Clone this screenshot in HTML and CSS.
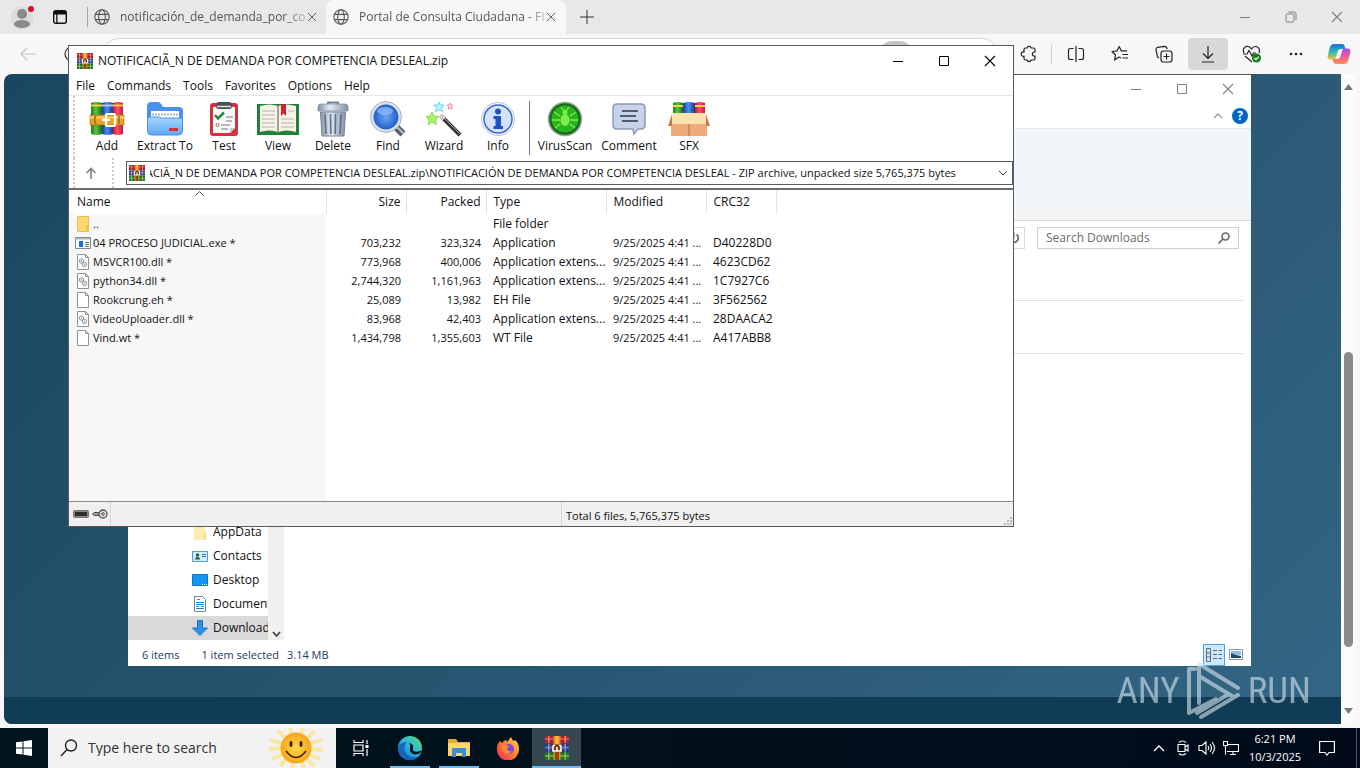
FILE: index.html
```html
<!DOCTYPE html>
<html lang="en">
<head>
<meta charset="utf-8">
<title>Desktop</title>
<meta name="viewport" content="width=device-width, initial-scale=1">
<link rel="stylesheet" href="styles.css">
</head>
<body>
<svg class="defs" aria-hidden="true">
  <defs>
    <linearGradient id="gGreen"><stop offset="0" stop-color="#1f7a1f"/><stop offset=".45" stop-color="#58c63e"/><stop offset="1" stop-color="#147014"/></linearGradient>
    <linearGradient id="gBlue"><stop offset="0" stop-color="#173c9c"/><stop offset=".45" stop-color="#4d8ff0"/><stop offset="1" stop-color="#153a99"/></linearGradient>
    <linearGradient id="gRed"><stop offset="0" stop-color="#c9152d"/><stop offset=".45" stop-color="#ff5068"/><stop offset="1" stop-color="#c0184a"/></linearGradient>
    <linearGradient id="gFolder" x2="0" y2="1"><stop offset="0" stop-color="#a6d8ff"/><stop offset="1" stop-color="#5fa8f4"/></linearGradient>
    <linearGradient id="gSteel"><stop offset="0" stop-color="#8492a8"/><stop offset=".4" stop-color="#e4ebf5"/><stop offset="1" stop-color="#8492a8"/></linearGradient>
    <linearGradient id="gEdge" x1="0" y1="1" x2="1" y2="0"><stop offset="0" stop-color="#0b5fb8"/><stop offset=".5" stop-color="#2bb3e0"/><stop offset="1" stop-color="#5be06a"/></linearGradient>
    <radialGradient id="gLens"><stop offset="0" stop-color="#6aa6f8"/><stop offset="1" stop-color="#1b56c4"/></radialGradient>
    <linearGradient id="gFox" x1="1" y1="0" x2="0" y2="1"><stop offset="0" stop-color="#ffe14a"/><stop offset=".5" stop-color="#ff7a26"/><stop offset="1" stop-color="#f0256a"/></linearGradient>
    <radialGradient id="gSun"><stop offset="0" stop-color="#ffd94a"/><stop offset="1" stop-color="#f5a51d"/></radialGradient>
    <linearGradient id="gCop1" x2="0" y2="1"><stop offset="0" stop-color="#1b6fe0"/><stop offset=".5" stop-color="#2cb7b0"/><stop offset="1" stop-color="#f3c527"/></linearGradient>
    <linearGradient id="gCop2" x2="0" y2="1"><stop offset="0" stop-color="#a24be8"/><stop offset=".5" stop-color="#ee5a9a"/><stop offset="1" stop-color="#ff9350"/></linearGradient>
  </defs>
  <symbol id="globe" viewBox="0 0 16 16"><g fill="none" stroke="#555" stroke-width="1.1"><circle cx="8" cy="8" r="7.2"/><ellipse cx="8" cy="8" rx="3.3" ry="7.2"/><path d="M1.4 5.4h13.2M1.4 10.6h13.2"/></g></symbol>
  <symbol id="rar" viewBox="0 0 24 24"><path fill="#a81f3c" d="M0 0h24v7.500H0z"/><path fill="#df4660" d="M0 2h24v2H0z"/><path fill="#25399a" d="M0 8h24v8H0z"/><path fill="#4f78d8" d="M0 10.500h24v2H0z"/><path fill="#1b7432" d="M0 16.500h24V24H0z"/><path fill="#4bb04c" d="M0 19h24v2H0z"/><path fill="#e6b848" d="M3 0h1.500v7H3zM3 8h1.500v7.500H3zM3 16.500h1.500V24H3zM19.500 0H21v7h-1.500zM19.500 8H21v7.500h-1.500zM19.500 16.500H21V24h-1.500z" opacity=".7"/><path fill="#e58a1c" d="M8.500 0h7v24h-7z"/><path fill="#f8b64a" d="M10.500 0h3v8h-3z"/><path fill="#8a4a10" d="M10 16h4v8h-4z"/><path fill="#7a3a14" d="M7 8.500h10v7.500H7z"/><path fill="none" stroke="#fff" stroke-width="1.600" d="M8 9.500V15h8V9.500M12 11v4M8 9.500h2M14 9.500h2"/></symbol>
  <symbol id="min" viewBox="0 0 12 12"><path fill="none" stroke="currentColor" d="M1 6.5h10"/></symbol>
  <symbol id="max" viewBox="0 0 12 12"><path fill="none" stroke="currentColor" d="M1.5 1.5h9v9h-9z"/></symbol>
  <symbol id="close" viewBox="0 0 12 12"><path fill="none" stroke="currentColor" stroke-width="1.1" d="M1 1l10 10M11 1L1 11"/></symbol>
  <symbol id="page" viewBox="0 0 16 16"><path fill="#fff" stroke="#8b949b" d="M2.500.5h8l3 3v12h-11z"/><path fill="none" stroke="#8b949b" d="M10.500.5v3h3"/></symbol>
  <symbol id="dll" viewBox="0 0 16 16"><use href="#page"/><g fill="none" stroke="#8d969d"><circle cx="6.500" cy="7" r="2.200"/><circle cx="9.500" cy="10.500" r="2.200"/><circle cx="6.500" cy="7" r=".5"/><circle cx="9.500" cy="10.500" r=".5"/></g></symbol>
</svg>

<main class="desktop">
  <section class="browser">
    <div class="tabstrip">
      <button class="avatar" aria-label="Profile"><svg width="24" height="28" viewBox="0 0 24 28"><circle cx="12" cy="15" r="11.500" fill="#dcdcdc"/><circle cx="12" cy="11" r="5" fill="#8a8a8a"/><ellipse cx="12" cy="21" rx="8" ry="4" fill="#8a8a8a"/><circle cx="21" cy="6" r="3" fill="#d8102c"/></svg></button>
      <button class="workspace" aria-label="Tab actions"><svg width="16" height="16" viewBox="0 0 16 16"><rect x="1.700" y="1.700" width="12.600" height="12.600" rx="2" fill="none" stroke="#111" stroke-width="1.400"/><path fill="#111" d="M2 2h12v3.500H5.500V14H4.200V5.500H2z"/></svg></button>
      <hr>
      <div class="tab"><svg width="16" height="16"><use href="#globe"/></svg><span>notificación_de_demanda_por_co</span><button aria-label="Close tab"><svg width="10" height="10"><use href="#close"/></svg></button></div>
      <div class="tab active"><svg width="16" height="16"><use href="#globe"/></svg><span>Portal de Consulta Ciudadana - FI</span><button aria-label="Close tab"><svg width="10" height="10"><use href="#close"/></svg></button></div>
      <button class="newtab" aria-label="New tab"><svg width="14" height="14" viewBox="0 0 14 14"><path stroke="#333" d="M7 0v14M0 7h14"/></svg></button>
      <div class="wincontrols muted push">
        <button aria-label="Minimize"><svg width="12" height="12"><use href="#min"/></svg></button>
        <button aria-label="Restore"><svg width="12" height="12" viewBox="0 0 12 12"><path fill="none" stroke="currentColor" d="M1 4q0-1 1-1h6q1 0 1 1v6q0 1-1 1H2q-1 0-1-1zM3.500 1H9q2 0 2 2v6"/></svg></button>
        <button aria-label="Close"><svg width="12" height="12"><use href="#close"/></svg></button>
      </div>
    </div>
    <div class="toolbar">
      <button aria-label="Back"><svg width="16" height="14" viewBox="0 0 16 14"><path fill="none" stroke="#c4c4c4" stroke-width="1.200" d="M16 7H1M7 1L1 7l6 6"/></svg></button>
      <button class="reload" aria-label="Refresh"><svg width="16" height="16" viewBox="0 0 16 16"><circle cx="8" cy="8" r="7" fill="none" stroke="#333" stroke-width="1.200"/></svg></button>
      <div class="omnibox"><i></i></div>
      <button aria-label="Extensions"><svg width="18" height="18" viewBox="0 0 18 18"><path fill="none" stroke="#222" stroke-width="1.200" stroke-linejoin="round" d="M4 4.500q0-1.500 1.500-1.500H7a2.200 2.200 0 0 1 4.200 0h2.300Q15 3 15 4.500V7h-.5a2 2 0 0 0 0 4.200h.5v2.300q0 1.500-1.500 1.500h-2.300a2.200 2.200 0 0 1-4.200 0H5.500Q4 15 4 13.500v-2.300a2.200 2.200 0 1 1 0-4.200z"/></svg></button>
      <hr>
      <button aria-label="Split screen"><svg width="18" height="18" viewBox="0 0 18 18"><path fill="none" stroke="#222" stroke-width="1.200" d="M9 1v16M6.500 3.500H3.500q-2 0-2 2v7q0 2 2 2h3M11.500 3.500h3q2 0 2 2v7q0 2-2 2h-3"/></svg></button>
      <button aria-label="Favorites"><svg width="18" height="18" viewBox="0 0 18 18"><path fill="none" stroke="#222" stroke-width="1.200" stroke-linejoin="round" d="M10 13l-2-1-4.500 3 1-5L1 6.500l5-.6L8.200 1.500l2.200 4.400H16M11.500 9.500H17M11.500 13H17"/></svg></button>
      <button aria-label="Collections"><svg width="18" height="18" viewBox="0 0 18 18"><g fill="none" stroke="#222" stroke-width="1.200"><rect x="6" y="6" width="11" height="11" rx="2.500"/><path d="M11.500 8.500v6M8.500 11.500h6M4 13l-1.500-1L1 5q-.3-2 1.500-2.700l7-1q1.800 0 2.500 2l.2.700"/></g></svg></button>
      <button class="pressed" aria-label="Downloads"><svg width="18" height="18" viewBox="0 0 18 18"><path fill="none" stroke="#222" stroke-width="1.200" d="M9 1v12M4 8.500l5 5 5-5M3 17h12"/></svg></button>
      <button aria-label="Browser essentials"><svg width="20" height="18" viewBox="0 0 20 18"><path fill="none" stroke="#222" stroke-width="1.200" d="M2 8C0 4 3 1 6 1.500q2 .3 3.500 2.500Q11 1.500 13.500 1.500c3 0 5 3 3.500 6.500M1 9h4l2-3.500 3 5.500 1.500-3H14M3 11l7 6"/><circle cx="14.500" cy="13" r="4.500" fill="#14801f"/><path fill="none" stroke="#fff" stroke-width="1.200" d="M12.300 13l1.700 1.600 2.700-3"/></svg></button>
      <button aria-label="More"><svg width="14" height="4" viewBox="0 0 14 4"><g fill="#222"><circle cx="2" cy="2" r="1.300"/><circle cx="7" cy="2" r="1.300"/><circle cx="12" cy="2" r="1.300"/></g></svg></button>
      <button class="copilot" aria-label="Copilot"><svg width="24" height="22" viewBox="0 0 24 22"><path fill="url(#gCop1)" d="M7 1h8q2 0 2.700 2l.8 3h-5q-2 0-2.700 2L8.500 15Q8 17 6 16.500H3q-3-.5-2.300-4L3 4q1-3 4-3z"/><path fill="url(#gCop2)" d="M17 21H9q-2 0-2.700-2l-.8-3h5q2 0 2.700-2l2.300-7q.5-2 2.500-1.500h3q3 .5 2.300 4L21 18q-1 3-4 3z"/></svg></button>
    </div>
    <div class="viewport">
      <div class="webpage"><footer></footer></div>
      <div class="vscroll"><svg width="9" height="6" viewBox="0 0 9 6"><path fill="#777" d="M0 6l4.500-6L9 6z"/></svg><span class="track"><i></i></span><svg width="9" height="6" viewBox="0 0 9 6"><path fill="#777" d="M0 0l4.500 6L9 0z"/></svg></div>
    </div>
  </section>

  <section class="explorer">
    <div class="wincontrols muted"><button aria-label="Minimize"><svg width="12" height="12"><use href="#min"/></svg></button><button aria-label="Maximize"><svg width="12" height="12"><use href="#max"/></svg></button><button aria-label="Close"><svg width="12" height="12"><use href="#close"/></svg></button></div>
    <div class="ribbontabs"><svg width="10" height="6" viewBox="0 0 10 6"><path fill="none" stroke="#999" stroke-width="1.300" d="M1 5l4-4 4 4"/></svg><button class="help" aria-label="Help">?</button></div>
    <div class="ribbon"></div>
    <div class="exaddress"><button aria-label="Refresh"><svg width="12" height="12" viewBox="0 0 12 12"><path fill="none" stroke="#666" stroke-width="1.700" d="M8.500 2.500a4.300 4.300 0 1 1-5 0"/><path fill="#666" d="M1 .500h5.500V6z"/></svg></button><label class="exsearch"><input type="text" placeholder="Search Downloads" aria-label="Search Downloads"><svg width="12" height="12" viewBox="0 0 12 12"><g fill="none" stroke="#666" stroke-width="1.600"><circle cx="7.500" cy="4.500" r="3.500"/><path d="M5 7l-4.500 4.500"/></g></svg></label></div>
    <div class="exbody">
      <nav class="tree">
        <a href="#appdata"><svg width="16" height="16" viewBox="0 0 16 16"><path fill="#fdebb0" d="M2 0h11v16H2z"/><path fill="#f8dc8a" d="M12 8h2v8h-2z"/></svg>AppData</a>
        <a href="#contacts"><svg width="16" height="16" viewBox="0 0 16 16"><path fill="#d2ecfb" stroke="#4d9fd0" d="M.5 3.500h15v10H.5z"/><circle cx="5.500" cy="7" r="1.700" fill="#285e46"/><path fill="#285e46" d="M3 11.500q0-2.500 2.500-2.500T8 11.500z"/><path stroke="#3577a8" d="M10 6.500h4M10 8.500h4"/></svg>Contacts</a>
        <a href="#desktop"><svg width="16" height="16" viewBox="0 0 16 16"><path fill="#1496f5" stroke="#0b79cc" d="M.5 2.500h15v11H.5z"/><path stroke="#fff" stroke-dasharray="1 1" d="M10 12.500h5"/></svg>Desktop</a>
        <a href="#documents"><svg width="16" height="16" viewBox="0 0 16 16"><path fill="#fff" stroke="#76838c" d="M2.500.5h8l3 3v12h-11z"/><path stroke="#2f88c4" d="M5 3.500h3M4 6.500h8M4 8.500h8M4 10.500h3M9 10.500h3M4 12.500h8"/></svg>Documents</a>
        <a class="selected" href="#downloads"><svg width="16" height="16" viewBox="0 0 16 16"><path fill="#2f8fe6" stroke="#1c73c7" d="M5.500.5h5V8h5L8 15.500.5 8h5z"/></svg>Downloads</a>
      </nav>
      <div class="treescroll"><svg width="9" height="7" viewBox="0 0 9 7"><path fill="none" stroke="#444" stroke-width="1.800" d="M1 1l3.500 4L8 1"/></svg></div>
      <div class="exfiles"><hr><hr></div>
    </div>
    <div class="exstatus"><span>6 items</span><span>1 item selected</span><span>3.14 MB</span>
      <button class="viewbtn on" aria-label="Details view"><svg width="18" height="14" viewBox="0 0 18 14"><path fill="none" stroke="#667" d="M1.500.5h4v13h-4zM1.500 5h4M1.500 9h4M8 2.500h4M13.500 2.500H17M8 6.500h4M13.500 6.500H17M8 10.500h4M13.500 10.500H17"/></svg></button>
      <button class="viewbtn" aria-label="Large icons view"><svg width="14" height="11" viewBox="0 0 14 11"><path fill="#fff" stroke="#8496a8" d="M.5.500h13v10H.5z"/><path fill="#8fbce6" d="M2 2h10v4H2z"/><path fill="#254a6a" d="M2 4l5 2 5 1v2H2z"/></svg></button>
    </div>
  </section>

  <section class="winrar">
    <header class="titlebar"><svg width="16" height="16"><use href="#rar"/></svg><h1>NOTIFICACIÃ_N DE DEMANDA POR COMPETENCIA DESLEAL.zip</h1>
      <div class="wincontrols push"><button aria-label="Minimize"><svg width="12" height="12"><use href="#min"/></svg></button><button aria-label="Maximize"><svg width="12" height="12"><use href="#max"/></svg></button><button aria-label="Close"><svg width="12" height="12"><use href="#close"/></svg></button></div>
    </header>
    <div class="menubar"><button>File</button><button>Commands</button><button>Tools</button><button>Favorites</button><button>Options</button><button>Help</button></div>
    <div class="tools">
      <button><svg viewBox="0 0 36 36"><path fill="url(#gGreen)" d="M2 2q5-2 11 0v31q-5 2-11 0z"/><path fill="url(#gBlue)" d="M13 2q5-2 11 0v31q-5 2-11 0z"/><path fill="url(#gRed)" d="M24 2q5-2 10 0v31q-5 2-10 0z"/><path stroke="#f2cb3e" stroke-width="2" d="M2 4.500h11M24 4.500h10"/><path stroke="#b9c7e6" stroke-width="2" d="M13 4.500h11"/><path fill="#e9a52a" stroke="#a7660d" stroke-width=".6" d="M1 14h34v10H1z"/><path fill="#f8d374" d="M1 15.500h34v2H1z"/><path fill="none" stroke="#a7660d" stroke-width="1.500" d="M7 15q-3 4 0 8M30 15v8"/><rect x="17" y="13" width="9" height="12" rx="1" fill="none" stroke="#fff" stroke-width="2.200"/><path stroke="#fff" stroke-width="2" d="M13 19h8"/></svg>Add</button>
      <button><svg viewBox="0 0 36 36"><path fill="#4a90ee" d="M0 5q0-4 4-4h7q2 0 3 2l2 3h16q4 0 4 4v14H0z"/><path fill="#fff" d="M4 10h28v12H4z"/><path stroke="#9fb6cc" stroke-width="2" stroke-dasharray="2 1" d="M5 13.500h26"/><path fill="url(#gFolder)" stroke="#4a90e6" d="M.5 18q0-2 2-2h9l3 1h19q2 0 2 2v11q0 4-4 4h-27q-4 0-4-4z"/><path stroke="#d9312c" stroke-width="3" d="M22 28.500h9"/></svg>Extract To</button>
      <button><svg viewBox="0 0 36 36"><rect x="4" y="2" width="28" height="33" rx="3" fill="#d62f3e"/><path fill="#fafafa" d="M7 6h22v21l-5 5H7z"/><path fill="#c3c9cf" d="M29 27l-5 5v-5z"/><rect x="10" y="1" width="16" height="7" rx="3" fill="#4a4f57"/><path stroke="#dce1e6" stroke-width="1.500" d="M11 5.500h14"/><path fill="none" stroke="#218a35" stroke-width="2.500" d="M9 14l3 3.500 6-6"/><path stroke="#9aa2aa" stroke-width="1.500" d="M20 16h7M20 20h6M15 24h9M15 28h7"/><circle cx="11.500" cy="24" r="1.500" fill="none" stroke="#777"/></svg>Test</button>
      <button><svg class="wide" viewBox="0 0 42 36"><path fill="#1f8238" d="M0 3h42v31H0z"/><path fill="#f6f2e8" d="M3 5q10-3 18 0v26q-9-3-18 0zM39 5q-10-3-18 0v26q9-3 18 0z"/><path stroke="#8d887c" stroke-width="1.500" d="M21 5v27"/><path stroke="#b9b4a8" stroke-width="1.200" d="M5 10h13M5 14h13M5 18h13M5 22h13M5 26h13M31 10h6M24 18h13M24 22h13M24 26h13"/><path fill="#d1222e" d="M24 3h5v12l-2.500-2.500L24 15z"/></svg>View</button>
      <button><svg viewBox="0 0 36 36"><path fill="none" stroke="#75849a" stroke-width="2" d="M13 4V1.500h10V4"/><path fill="url(#gSteel)" stroke="#7c8aa0" stroke-width=".7" d="M3 6q0-3 3-3h24q3 0 3 3v4H3z"/><path fill="url(#gSteel)" stroke="#73829a" d="M5.500 11h25L29 35H7z"/><path stroke="#66748a" stroke-width="1.800" d="M10 13l1 20M15.500 13l.3 20M20.500 13l-.3 20M26 13l-1 20"/></svg>Delete</button>
      <button><svg viewBox="0 0 36 36"><path stroke="#59616b" stroke-width="7" d="M24 24l9 9"/><path stroke="#b5bcc4" stroke-width="2" d="M25 24l9 9"/><circle cx="16" cy="16" r="14" fill="url(#gLens)" stroke="#dde4ee" stroke-width="3"/><circle cx="16" cy="16" r="15.400" fill="none" stroke="#a4b0c0"/><ellipse cx="15" cy="10" rx="8" ry="4" fill="#9cc8ff" opacity=".65"/></svg>Find</button>
      <button><svg viewBox="0 0 36 36"><path stroke="#333" stroke-width="4" d="M15 15l19 19"/><path stroke="#aaa" d="M16 15l18 18"/><path stroke="#ccc" stroke-width="4" d="M14 14l4 4"/><path fill="#a8f268" stroke="#8fdc50" d="M6 11l2 4 4.500.5-3 3.500 1 4.500L6 21l-4 2.500 1-4.500L0 15.500l4-.5z"/><path fill="#b5f4ff" stroke="#6fd8ec" d="M13 1l1.500 3H18l-2.500 3 1 3.500L13 8.800 9.500 10.500l1-3.500L8 4h3.500z"/><path fill="#ffe0e6" stroke="#f08ba0" d="M24 2l1 2 2 .2-1.500 1.500L26 8l-2-1-2 1 .5-2.300L21 4.200l2-.2z"/></svg>Wizard</button>
      <button><svg viewBox="0 0 36 36"><circle cx="18" cy="18" r="16.500" fill="#f5f8ff" stroke="#b5c2d8"/><circle cx="18" cy="18" r="14" fill="#d5e3fa" stroke="#3b6ac5" stroke-width="1.500"/><circle cx="18" cy="10.500" r="3" fill="#1e55c2"/><path fill="#1e55c2" d="M13.500 15H21v10h2v3H13.500v-3h2v-7h-2z"/></svg>Info</button>
      <hr>
      <button><svg viewBox="0 0 36 36"><circle cx="18" cy="18" r="16.500" fill="#126d19" stroke="#9aa59b" stroke-width="1.500"/><circle cx="18" cy="18" r="13.500" fill="#29b41e"/><ellipse cx="18" cy="19" rx="4.500" ry="6" fill="#7dec4c"/><circle cx="18" cy="11" r="2.500" fill="#7dec4c"/><path fill="none" stroke="#7dec4c" stroke-width="1.300" d="M7 11l6 4M29 11l-6 4M5 19h8M31 19h-8M8 27l5-4M28 27l-5-4M14 6l2 3M22 6l-2 3"/></svg>VirusScan</button>
      <button><svg viewBox="0 0 36 36"><path fill="#c7d3e6" stroke="#8a9bb8" stroke-width="1.500" d="M6 3h24q4 0 4 4v17q0 4-4 4h-3l-4 5-1-5H6q-4 0-4-4V7q0-4 4-4z"/><path stroke="#4e5e78" stroke-width="2" d="M11 10h16M9 15h16M11 20h16"/></svg>Comment</button>
      <button><svg class="wide" viewBox="0 0 42 36"><path fill="url(#gGreen)" d="M5 2q5-2 10 0v12H5z"/><path fill="url(#gBlue)" d="M15 2q6-2 12 0v12H15z"/><path fill="url(#gRed)" d="M27 2q5-2 10 0v12H27z"/><path stroke="#f4d34a" stroke-width="2" d="M5 5h10M27 5h10"/><path fill="#f0ab7c" d="M3 16h36v19H3z"/><path stroke="#b86b3f" d="M21 22v13"/><path fill="#fbe2ae" d="M5 12h32l3 11H2z"/><path fill="#c87b4b" d="M4 13L0 25h4zM38 13l4 12h-4z"/></svg>SFX</button>
    </div>
    <div class="addressrow">
      <button class="up" aria-label="Up one level"><svg width="12" height="12" viewBox="0 0 12 12"><path fill="none" stroke="#858585" stroke-width="1.700" d="M6 12V1.500M1.500 6L6 1.500 10.500 6"/></svg></button>
      <label class="path"><svg width="16" height="16"><use href="#rar"/></svg><input type="text" aria-label="Archive path" value="ACIÃ_N DE DEMANDA POR COMPETENCIA DESLEAL.zip\NOTIFICACIÓN DE DEMANDA POR COMPETENCIA DESLEAL - ZIP archive, unpacked size 5,765,375 bytes"><svg width="10" height="6" viewBox="0 0 10 6"><path fill="none" stroke="#444" d="M1 1l4 4 4-4"/></svg></label>
    </div>
    <div class="list">
      <svg class="sort" width="9" height="5" viewBox="0 0 9 5"><path fill="none" stroke="#555" d="M.500 4.500l4-4 4 4"/></svg>
      <table>
        <colgroup><col class="c-name"><col class="c-num"><col class="c-num"><col class="c-type"><col class="c-mod"><col class="c-crc"></colgroup>
        <thead><tr><th>Name</th><th class="num">Size</th><th class="num">Packed</th><th>Type</th><th>Modified</th><th>CRC32</th></tr></thead>
        <tbody>
          <tr><td><svg width="16" height="16" viewBox="0 0 16 16"><path fill="#fbd870" stroke="#edc04e" d="M2.500.5h11v15h-11z"/><path fill="#f3c44e" d="M11 9h3v7h-3z"/></svg>..</td><td></td><td></td><td>File folder</td><td></td><td></td></tr>
          <tr><td><svg width="16" height="16" viewBox="0 0 16 16"><path fill="#fff" stroke="#7e8a94" d="M.5 2.500h15v11H.5z"/><path fill="#aeb8c0" d="M1 3h14v1.500H1z"/><path fill="#1375d8" d="M4 6h4v6H4z"/><path stroke="#6d7f8d" d="M10 7.500h4M10 9.500h4M10 11.500h4"/></svg>04 PROCESO JUDICIAL.exe *</td><td class="num">703,232</td><td class="num">323,324</td><td>Application</td><td class="date">9/25/2025 4:41 ...</td><td>D40228D0</td></tr>
          <tr><td><svg width="16" height="16"><use href="#dll"/></svg>MSVCR100.dll *</td><td class="num">773,968</td><td class="num">400,006</td><td>Application extens...</td><td class="date">9/25/2025 4:41 ...</td><td>4623CD62</td></tr>
          <tr><td><svg width="16" height="16"><use href="#dll"/></svg>python34.dll *</td><td class="num">2,744,320</td><td class="num">1,161,963</td><td>Application extens...</td><td class="date">9/25/2025 4:41 ...</td><td>1C7927C6</td></tr>
          <tr><td><svg width="16" height="16"><use href="#page"/></svg>Rookcrung.eh *</td><td class="num">25,089</td><td class="num">13,982</td><td>EH File</td><td class="date">9/25/2025 4:41 ...</td><td>3F562562</td></tr>
          <tr><td><svg width="16" height="16"><use href="#dll"/></svg>VideoUploader.dll *</td><td class="num">83,968</td><td class="num">42,403</td><td>Application extens...</td><td class="date">9/25/2025 4:41 ...</td><td>28DAACA2</td></tr>
          <tr><td><svg width="16" height="16"><use href="#page"/></svg>Vind.wt *</td><td class="num">1,434,798</td><td class="num">1,355,603</td><td>WT File</td><td class="date">9/25/2025 4:41 ...</td><td>A417ABB8</td></tr>
        </tbody>
      </table>
    </div>
    <footer class="rarstatus">
      <span class="drives"><svg width="16" height="8" viewBox="0 0 16 8"><rect x=".5" y=".5" width="15" height="7" rx="1" fill="#888" stroke="#777"/><path fill="#2d2d2d" d="M2 2h12v4H2z"/></svg><svg width="16" height="10" viewBox="0 0 16 10"><path fill="#999" stroke="#555" d="M8 3.500H2L.5 5 2 6.500h6z"/><circle cx="11" cy="5" r="4" fill="#ddd" stroke="#555" stroke-width="1.300"/><circle cx="11" cy="5" r="1.300" fill="none" stroke="#555"/></svg></span>
      <span class="selection"></span><span class="total">Total 6 files, 5,765,375 bytes</span>
      <svg width="10" height="10" viewBox="0 0 10 10"><path fill="#b4b4b4" d="M7 1h2v2H7zM4 4h2v2H4zM7 4h2v2H7zM1 7h2v2H1zM4 7h2v2H4zM7 7h2v2H7z"/></svg>
    </footer>
  </section>

  <div class="watermark"><span>ANY</span><svg width="56" height="60" viewBox="0 0 56 60"><g fill="none" stroke="currentColor" stroke-width="4" stroke-linejoin="round" stroke-linecap="round"><path d="M9 8H3v44l27-14M13 42V3l39 24M13 15l33 20M15 56l37-22M11 52l32-19"/></g></svg><span>RUN</span></div>
</main>

<footer class="taskbar">
  <button class="start" aria-label="Start"><svg width="16" height="16" viewBox="0 0 16 16"><path fill="#fff" d="M0 2.300L6.500 1.400v6.100H0zM7.500 1.200L16 0v7.500H7.500zM0 8.500h6.500v6.100L0 13.700zM7.500 8.500H16V16l-8.500-1.200z"/></svg></button>
  <label class="tasksearch"><svg width="18" height="18" viewBox="0 0 18 18"><g fill="none" stroke="#222" stroke-width="1.400"><circle cx="11" cy="6.500" r="5.500"/><path d="M7 10.500L1 17"/></g></svg><input type="text" placeholder="Type here to search" aria-label="Search">
    <svg class="sun" width="60" height="40" viewBox="0 0 60 40"><g stroke="#fbe7a4" stroke-width="4"><path d="M30 20L4 12M30 20L3 21M30 20L6 31M30 20L12 3M30 20L14 38M30 20L24 0M30 20L26 40M30 20L37 0M30 20L38 40M30 20L49 3M30 20L48 38M30 20L56 12M30 20L57 22M30 20L54 31"/></g><circle cx="30" cy="20" r="15.500" fill="url(#gSun)"/><ellipse cx="25" cy="16" rx="1.500" ry="3" fill="#3a2406"/><ellipse cx="35" cy="16" rx="1.500" ry="3" fill="#3a2406"/><path fill="none" stroke="#3a2406" stroke-width="1.500" d="M20 23q10 13 20 0"/></svg></label>
  <div class="apps">
    <button aria-label="Task view"><svg width="16" height="16" viewBox="0 0 16 16"><path fill="none" stroke="#fff" stroke-width="1.200" d="M1 0v2.500h9V0M1 16v-2.500h9V16M1 5h9v6H1zM14 0v4M14 9v7"/><path fill="#fff" d="M12.500 5h3v3h-3z"/></svg></button>
    <button class="open" aria-label="Edge"><svg width="26" height="26" viewBox="0 0 26 26"><circle cx="13" cy="13" r="12" fill="url(#gEdge)"/><path fill="#1565bd" d="M1 13q2-6 9-6c-4 3-4 13 5 15q4 1 8-2-4 6-12 5Q1 23 1 13z"/><path fill="#02151f" d="M13 12q1-2-1-4 5 1 4 5-1 3 2 3.500 3 .5 7-1-2 4-7 4-6-1-5-7.500z"/></svg></button>
    <button class="open" aria-label="File Explorer"><svg width="24" height="20" viewBox="0 0 24 20"><path fill="#e8a93a" d="M1 1h8l2 3h12v4H1z"/><path fill="#fcd66d" d="M1 5h22v13H1z"/><path fill="#3a8fd4" d="M5 11q0-1 1-1h12q1 0 1 1v8h-4v-4H9v4H5z"/></svg></button>
    <button aria-label="Firefox"><svg width="24" height="24" viewBox="0 0 24 24"><path fill="url(#gFox)" d="M4 5l2 2q2-3 4-3l1 2 4-5q1 3 3 4l1-1q4 3 4 9a11 11 0 0 1-22 1Q0 9 4 5z"/><circle cx="13" cy="13" r="5" fill="#7b48d8"/><path fill="#ff8b2a" d="M6 9q4-1 6 1l2 1q-3 0-3 2 1 3 5 2-3 4-7 2-4-3-3-8z"/></svg></button>
    <button class="open current" aria-label="WinRAR"><svg width="24" height="24"><use href="#rar"/></svg></button>
  </div>
  <div class="tray">
    <button aria-label="Show hidden icons"><svg width="12" height="8" viewBox="0 0 12 8"><path fill="none" stroke="#fff" stroke-width="1.300" d="M1 7l5-5 5 5"/></svg></button>
    <button aria-label="Meet now"><svg width="14" height="16" viewBox="0 0 14 16"><path fill="none" stroke="#fff" stroke-width="1.100" d="M2 4.500h7v7H2zM9 7l3-2v6L9 9M3 2.500q3-3 7 0M3 13.500q3 3 7 0"/></svg></button>
    <button aria-label="Volume"><svg width="18" height="16" viewBox="0 0 18 16"><path fill="none" stroke="#fff" stroke-width="1.100" d="M1 5.500h3l4-3.500v12l-4-3.500H1zM10 6q1.500 2 0 4M12 4q3 4 0 8M14 2q5 6 0 12"/></svg></button>
    <button aria-label="Network"><svg width="16" height="14" viewBox="0 0 16 14"><path fill="none" stroke="#fff" stroke-width="1.100" d="M5 3.500h10.500v7H4M10 10.500v3M7 13.500h6M.5.500h4v4h-4zM2.500 4.500v9"/></svg></button>
    <time>6:21 PM<br>10/3/2025</time>
    <button class="notes" aria-label="Notifications"><svg width="16" height="16" viewBox="0 0 16 16"><path fill="none" stroke="#fff" stroke-width="1.200" d="M.600 1.500h14.800v11H10L8 15l-2-2.500H.600z"/></svg></button>
  </div>
</footer>
</body>
</html>
```
FILE: styles.css
```css
* { box-sizing: border-box; }
body {
  margin: 0;
  height: 100vh;
  display: flex;
  flex-direction: column;
  overflow: hidden;
  font: 12px/16px "Open Sans", "Noto Sans", sans-serif;
  color: #111;
}
button, input { font: inherit; color: inherit; border: 0; background: none; padding: 0; }
button { display: flex; align-items: center; justify-content: center; }
input { min-width: 0; outline: 0; }
h1 { margin: 0; font-size: 12px; font-weight: 400; white-space: nowrap; }
hr { margin: 0; border: 0; }
svg { flex: none; display: block; }
.defs { position: absolute; width: 0; height: 0; }
.push { margin-left: auto; }

.desktop { position: relative; flex: 1; min-height: 0; }
.browser { height: 100%; display: flex; flex-direction: column; background: #f7f7f7; }
.tabstrip { display: flex; height: 34px; background: #e8e8e8; }
.tabstrip > hr { width: 1px; height: 20px; align-self: center; margin-left: 11px; background: #a5a5a5; }
.avatar { width: 44px; }
.workspace { width: 32px; }
.tab { display: flex; align-items: center; width: 238px; padding: 0 9px 0 6px; color: #555; }
.tab.active { width: 240px; padding: 0 10px 0 7px; background: #f7f7f7; border-radius: 8px 8px 0 0; }
.tab span { flex: 1; margin-left: 10px; overflow: hidden; white-space: nowrap; mask-image: linear-gradient(90deg, #000 88%, #0004); }
.newtab { width: 42px; }
.wincontrols { display: flex; }
.wincontrols button { width: 46px; height: 30px; color: #000; }
.wincontrols.muted button { color: #808080; }
.tabstrip .wincontrols button { height: 34px; }

.toolbar { display: flex; height: 40px; align-items: center; }
.toolbar button { width: 44px; height: 32px; }
.toolbar button:first-child { width: 56px; }
.toolbar .reload { width: 32px; }
.toolbar .copilot { width: 42px; }
.toolbar .pressed { width: 40px; margin: 0 2px; background: #d8d8d8; border-radius: 4px; }
.toolbar hr { width: 1px; height: 20px; margin-right: 2px; background: #d0d0d0; }
.omnibox { flex: 1; height: 32px; margin: 0 9px 0 15px; padding: 2px 84px; border: 1px solid #d4d4d4; border-radius: 16px; background: #fff; display: flex; justify-content: flex-end; }
.omnibox i { width: 34px; height: 26px; border-radius: 13px; background: #c4c4c4; }
.viewport { flex: 1; min-height: 0; display: flex; padding: 0 4px 4px; }
.webpage { flex: 1; display: flex; align-items: flex-end; border-radius: 8px 0 0 8px; overflow: hidden; background: linear-gradient(135deg, #1a4661, #27546f 50%, #336685); }
.webpage footer { flex: 1; height: 27px; background: #113c56; }
.vscroll { width: 15px; padding: 10px 0; display: flex; flex-direction: column; align-items: center; background: #fcfcfc; border-radius: 0 8px 8px 0; }
.track { flex: 1; width: 9px; display: flex; flex-direction: column; }
.track::before { content: ""; flex: 261; }
.track i { flex: 294; border-radius: 5px; background: #8a8a8a; }
.track::after { content: ""; flex: 61; }

.explorer { position: absolute; left: 128px; right: 109px; top: 74px; bottom: 62px; display: flex; flex-direction: column; background: #fff; border-top: 1px solid #555; }
.explorer > .wincontrols { justify-content: flex-end; }
.explorer > .wincontrols button { height: 28px; }
.ribbontabs { height: 25px; padding-right: 3px; display: flex; align-items: center; justify-content: flex-end; gap: 9px; }
.help { width: 16px; height: 16px; border-radius: 50%; background: #0067c0; color: #fff; font-weight: 700; }
.ribbon { height: 93px; background: linear-gradient(#f3f6f9 80px, #f5f5f5 80px); border-top: 1px solid #e3e6ea; border-bottom: 1px solid #d8d8d8; }
.exaddress { height: 34px; padding: 0 12px; display: flex; align-items: center; justify-content: flex-end; gap: 12px; }
.exaddress button { width: 22px; height: 22px; border: 1px solid #d9d9d9; }
.exsearch { display: flex; align-items: center; width: 202px; height: 22px; padding: 0 8px; border: 1px solid #d0d0d0; }
.exsearch input { flex: 1; }
.exsearch input::placeholder { color: #6d6d6d; opacity: 1; }
.exbody { flex: 1; min-height: 0; display: flex; }
.tree { width: 140px; display: flex; flex-direction: column; justify-content: flex-end; overflow: hidden; }
.tree a { display: flex; align-items: center; gap: 5px; height: 24px; padding-left: 64px; color: inherit; text-decoration: none; }
.tree .selected { background: #d9d9d9; }
.treescroll { width: 16px; display: flex; align-items: flex-end; justify-content: center; padding-bottom: 2px; background: #f0f0f0; }
.exfiles { flex: 1; padding: 45px 8px 0 0; }
.exfiles hr { height: 1px; margin-bottom: 52px; background: #e0e0e0; }
.exstatus { height: 26px; padding: 3px 4px 0 14px; display: flex; align-items: center; color: #1e395b; font-size: 11px; }
.exstatus span { margin-right: 8px; }
.exstatus span:first-child { margin-right: 22px; }
.viewbtn { width: 22px; height: 22px; }
.viewbtn.on { margin-left: auto; background: #cce8ff; border: 1px solid #4ba4e0; }

.winrar { position: absolute; left: 68px; right: 346px; top: 45px; bottom: 201px; display: flex; flex-direction: column; background: #fff; border: 1px solid #5a5a5a; }
.titlebar { display: flex; align-items: center; gap: 5px; height: 29px; padding-left: 8px; }
.menubar { display: flex; height: 21px; padding: 2px 0 0 1px; border-bottom: 1px solid #e6e6e6; }
.menubar button { padding: 0 6px; }
.tools { display: grid; grid-template-columns: 50px 66px 52px 56px 54px 56px 56px 52px 10px 62px 66px 54px; margin-left: 4px; padding: 2px 0 0 7px; height: 62px; align-items: center; border-left: 2px dotted #cfcac2; }
.tools button { flex-direction: column; height: 58px; line-height: 18px; }
.tools svg { width: 36px; height: 36px; }
.tools svg.wide { width: 42px; }
.tools hr { width: 1px; height: 54px; justify-self: center; background: #777; }
.addressrow { display: flex; align-items: center; height: 30px; margin-left: 4px; border-left: 2px dotted #cfcac2; }
.up { width: 32px; height: 24px; }
.path { flex: 1; display: flex; align-items: center; height: 24px; margin-left: 10px; padding: 0 4px 0 2px; gap: 5px; border: 1px solid #5a5a5a; }
.up { border-right: 0; }
.addressrow::before { content: ""; order: 1; width: 2px; align-self: stretch; margin-left: 5px; border-left: 2px dotted #cfcac2; }
.path { order: 2; margin-left: 10px; }
.path { margin-left: 10px; }
.path input { flex: 1; text-indent: -4px; font-size: 11px; }
.list { position: relative; flex: 1; min-height: 0; border-top: 2px solid #6e6e6e; background: linear-gradient(#f7f7f7, #f7f7f7) 0 24px / 257px 100% no-repeat; }
.sort { position: absolute; left: 126px; top: 1px; }
table { border-collapse: collapse; table-layout: fixed; width: 707px; }
.c-name { width: 257px; } .c-num { width: 80px; } .c-type { width: 120px; } .c-mod { width: 100px; } .c-crc { width: 70px; }
th { height: 24px; padding: 0 0 0 7px; font-weight: 400; text-align: left; background: #fff; border-right: 1px solid #e5e5e5; }
td { height: 19px; padding: 0 0 0 7px; white-space: nowrap; }
th:first-child { padding-left: 8px; }
td:first-child { display: flex; align-items: center; gap: 2px; padding-left: 6px; font-size: 11px; }
.num, td.num { text-align: right; padding: 0 5px 0 0; }
td.num, .date { font-size: 11px; }
.rarstatus { height: 25px; display: flex; align-items: stretch; background: #f0f0f0; border-top: 1px solid #8a8a8a; }
.rarstatus span { display: flex; align-items: center; }
.drives { width: 42px; padding-left: 4px; gap: 3px; border-right: 1px solid #d5d5d5; }
.selection { width: 451px; border-right: 1px solid #d5d5d5; }
.total { flex: 1; padding: 4px 4px 0; font-size: 11px; }
.rarstatus > svg { align-self: flex-end; }

.watermark { position: absolute; right: 49px; bottom: 7px; display: flex; align-items: center; gap: 6px; color: #d5e2ea; opacity: .62; font: 37px/60px "Liberation Sans Narrow", "Roboto Condensed", "Liberation Sans", sans-serif; }

.taskbar { height: 40px; display: flex; background: linear-gradient(90deg, #02151e, #010b1a); color: #fff; }
.start { width: 48px; }
.tasksearch { width: 288px; display: flex; align-items: center; padding-left: 12px; gap: 10px; background: #f2f2f2; }
.tasksearch input { flex: 1; font-size: 14px; color: #333; }
.tasksearch input::placeholder { color: #333; opacity: 1; }
.sun { margin-right: 10px; }
.apps { display: flex; }
.apps button { width: 49px; }
.apps .open { position: relative; }
.apps .open::after { content: ""; position: absolute; left: 5px; right: 4px; bottom: 0; height: 2px; background: #76b9ed; }
.apps .current { background: #35474f; }
.apps .current::after { left: 0; right: 0; }
.tray { margin-left: auto; display: flex; align-items: center; padding-right: 3px; }
.tray button { width: 24px; height: 40px; }
.tray time { width: 64px; line-height: 18px; text-align: center; font-size: 11px; }
.tray .notes { width: 50px; padding-right: 9px; border-right: 1px solid #4c5866; }
```
